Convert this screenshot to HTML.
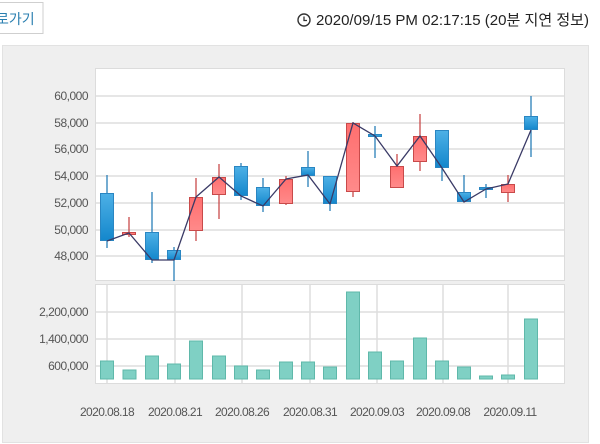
<!DOCTYPE html>
<html><head><meta charset="utf-8"><style>
html,body{margin:0;padding:0;background:#fff;width:600px;height:444px;overflow:hidden;font-family:"Liberation Sans","Noto Sans CJK KR",sans-serif;}
</style></head><body>
<svg width="600" height="444" xmlns="http://www.w3.org/2000/svg" style="position:absolute;left:0;top:0">
<defs>
<linearGradient id="bl" x1="0" x2="0" y1="0" y2="1"><stop offset="0" stop-color="#4db0e6"/><stop offset="1" stop-color="#1487cc"/></linearGradient>
<linearGradient id="rd" x1="0" x2="0" y1="0" y2="1"><stop offset="0" stop-color="#ff6f6f"/><stop offset="1" stop-color="#ff8a8a"/></linearGradient>
</defs>
<rect x="-10" y="2.5" width="53" height="31" fill="#fff" stroke="#cfcfcf"/>
<text x="-4" y="24" font-size="14" fill="#2a7fb0" font-family="Liberation Sans,Noto Sans CJK KR,sans-serif">로가기</text>
<circle cx="304" cy="20" r="6" fill="none" stroke="#333" stroke-width="1.4"/>
<path d="M304 16.5V20.5H307" fill="none" stroke="#333" stroke-width="1.3"/>
<text x="316" y="25" font-size="15" fill="#222" textLength="273" lengthAdjust="spacingAndGlyphs" font-family="Liberation Sans,Noto Sans CJK KR,sans-serif">2020/09/15 PM 02:17:15 (20분 지연 정보)</text>
<rect x="2.5" y="45.5" width="586" height="397" fill="#efefef" stroke="#e2e2e2"/>
<rect x="95.5" y="68.5" width="469" height="212" fill="#fff" stroke="#dcdcdc"/>
<rect x="95.5" y="284.5" width="469" height="99" fill="#fff" stroke="#dcdcdc"/>
<g stroke="#dedede" stroke-width="1.5">
<line x1="96" x2="564" y1="96" y2="96"/><line x1="96" x2="564" y1="123" y2="123"/><line x1="96" x2="564" y1="149" y2="149"/><line x1="96" x2="564" y1="176" y2="176"/><line x1="96" x2="564" y1="203" y2="203"/><line x1="96" x2="564" y1="230" y2="230"/><line x1="96" x2="564" y1="256" y2="256"/>
<line x1="96" x2="564" y1="312" y2="312"/><line x1="96" x2="564" y1="339" y2="339"/><line x1="96" x2="564" y1="366" y2="366"/>
<line x1="107" x2="107" y1="285" y2="383"/><line x1="175" x2="175" y1="285" y2="383"/><line x1="242" x2="242" y1="285" y2="383"/><line x1="310" x2="310" y1="285" y2="383"/><line x1="377" x2="377" y1="285" y2="383"/><line x1="443" x2="443" y1="285" y2="383"/><line x1="508" x2="508" y1="285" y2="383"/>
</g>
<g font-size="12" fill="#555" text-anchor="end" letter-spacing="-0.5">
<text x="88" y="100">60,000</text><text x="88" y="127">58,000</text><text x="88" y="153">56,000</text><text x="88" y="180">54,000</text><text x="88" y="207">52,000</text><text x="88" y="234">50,000</text><text x="88" y="260">48,000</text>
<text x="88" y="316">2,200,000</text><text x="88" y="343">1,400,000</text><text x="88" y="370">600,000</text>
</g>
<g font-size="12" fill="#555" text-anchor="middle" letter-spacing="-0.6">
<text x="107" y="416">2020.08.18</text><text x="175" y="416">2020.08.21</text><text x="242" y="416">2020.08.26</text><text x="310" y="416">2020.08.31</text><text x="377" y="416">2020.09.03</text><text x="443" y="416">2020.09.08</text><text x="510" y="416">2020.09.11</text>
</g>
<g fill="#7fd0c4" stroke="#5fb8aa" stroke-width="1">
<rect x="100.5" y="361" width="13" height="18"/><rect x="123" y="370" width="13" height="9"/><rect x="145.5" y="356" width="13" height="23"/><rect x="167.5" y="364" width="13" height="15"/><rect x="189.5" y="341" width="13" height="38"/><rect x="212.5" y="356" width="13" height="23"/><rect x="234.5" y="366" width="13" height="13"/><rect x="256.5" y="370" width="13" height="9"/><rect x="279.5" y="362" width="13" height="17"/><rect x="301.5" y="362" width="13" height="17"/><rect x="323.5" y="367" width="13" height="12"/><rect x="346.5" y="292" width="13" height="87"/><rect x="368.5" y="352" width="13" height="27"/><rect x="390.5" y="361" width="13" height="18"/><rect x="413.5" y="338" width="13" height="41"/><rect x="435.5" y="361" width="13" height="18"/><rect x="457.5" y="367" width="13" height="12"/><rect x="479.5" y="376" width="13" height="3"/><rect x="501.5" y="375" width="13" height="4"/><rect x="524.5" y="319" width="13" height="60"/>
</g>
<g stroke-width="1.3">
<g stroke="#2a7fb8">
<line x1="107" x2="107" y1="175" y2="248"/><line x1="152" x2="152" y1="192" y2="263"/><line x1="174" x2="174" y1="247" y2="281"/><line x1="241" x2="241" y1="163" y2="200"/><line x1="263" x2="263" y1="178" y2="212"/><line x1="308" x2="308" y1="151" y2="187"/><line x1="330" x2="330" y1="176" y2="211"/><line x1="375" x2="375" y1="126" y2="158"/><line x1="442" x2="442" y1="130" y2="181"/><line x1="464" x2="464" y1="175" y2="202"/><line x1="486" x2="486" y1="184" y2="198"/><line x1="531" x2="531" y1="96" y2="157"/>
</g>
<g stroke="#c84a4a">
<line x1="129" x2="129" y1="217" y2="237"/><line x1="196" x2="196" y1="178" y2="241"/><line x1="219" x2="219" y1="164" y2="219"/><line x1="286" x2="286" y1="176" y2="205"/><line x1="353" x2="353" y1="122" y2="197"/><line x1="397" x2="397" y1="154" y2="188"/><line x1="420" x2="420" y1="114" y2="171"/><line x1="508" x2="508" y1="175" y2="202"/>
</g>
</g>
<g fill="url(#bl)" stroke="#2a86c2">
<rect x="100.5" y="193.5" width="13" height="47"/><rect x="145.5" y="232.5" width="13" height="27"/><rect x="167.5" y="250.5" width="13" height="9"/><rect x="234.5" y="166.5" width="13" height="29"/><rect x="256.5" y="187.5" width="13" height="18"/><rect x="301.5" y="167.5" width="13" height="8"/><rect x="323.5" y="176.5" width="13" height="27"/><rect x="368.5" y="134.5" width="13" height="2"/><rect x="435.5" y="130.5" width="13" height="37"/><rect x="457.5" y="192.5" width="13" height="9"/><rect x="479.5" y="187.5" width="13" height="2"/><rect x="524.5" y="116.5" width="13" height="13"/>
</g>
<g fill="url(#rd)" stroke="#c84a4a">
<rect x="122.5" y="232.5" width="13" height="2"/><rect x="189.5" y="197.5" width="13" height="33"/><rect x="212.5" y="177.5" width="13" height="17"/><rect x="279.5" y="179.5" width="13" height="24"/><rect x="346.5" y="123.5" width="13" height="68"/><rect x="390.5" y="166.5" width="13" height="21"/><rect x="413.5" y="136.5" width="13" height="25"/><rect x="501.5" y="184.5" width="13" height="8"/>
</g>
<polyline fill="none" stroke="#3a3a66" stroke-width="1.3" points="107,241 129,233 152,260 174,260 196,197 219,177 241,196 263,206 286,179 308,175 330,204 353,123 375,136 397,166 420,136 442,168 464,202 486,189 508,184 531,130"/>
</svg>
</body></html>
